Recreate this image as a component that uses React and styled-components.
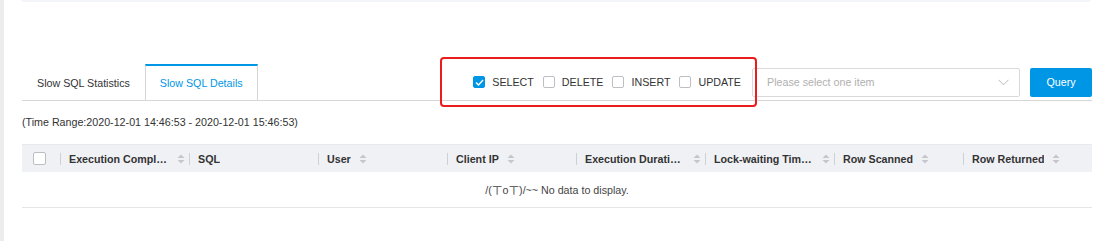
import React from "react";
import styled, { createGlobalStyle } from "styled-components";

const GlobalStyle = createGlobalStyle`
  body {
    margin: 0;
    background: #fff;
    font-family: "Liberation Sans", Arial, "Noto Sans CJK SC", sans-serif;
    font-size: 10.7px;
    color: #333;
  }
`;

const BLUE = "#0096e6";

const Page = styled.div`
  display: flex;
  width: 1107px;
  height: 241px;
  overflow: hidden;
`;

const Strip = styled.div`
  width: 4px;
  flex-shrink: 0;
  background: #ececec;
`;

const Main = styled.div`
  flex: 1;
  padding: 0 15px 0 18px;
  display: flex;
  flex-direction: column;
`;

const TopEdge = styled.div`
  height: 2px;
  margin-right: 2px;
  background: #f3f5f8;
`;

const Toolbar = styled.div`
  margin-top: 62px;
  display: flex;
  justify-content: space-between;
  align-items: center;
  border-bottom: 1px solid #d6d6d6;
`;

const Tabs = styled.div`
  display: flex;
  align-self: flex-end;
`;

const Tab = styled.div`
  box-sizing: border-box;
  height: 36px;
  padding: 0 14px;
  display: flex;
  align-items: center;
  color: ${(p) => (p.$active ? BLUE : "#333")};
  border-top: 2px solid ${(p) => (p.$active ? BLUE : "transparent")};
  border-left: 1px solid ${(p) => (p.$active ? "#d6d6d6" : "transparent")};
  border-right: 1px solid ${(p) => (p.$active ? "#d6d6d6" : "transparent")};
  background: #fff;
`;

const Controls = styled.div`
  display: flex;
  align-items: center;
`;

const CheckGroup = styled.div`
  position: relative;
  display: flex;
  align-items: center;
  gap: 9px;
  margin-right: 11px;
`;

const Annotation = styled.div`
  position: absolute;
  left: -33px;
  right: -16px;
  top: -17px;
  bottom: -17px;
  border: 2.5px solid #eb1c1c;
  border-radius: 4px;
  pointer-events: none;
`;

const CheckLabel = styled.label`
  display: flex;
  align-items: center;
  gap: 7px;
  color: #333;
  line-height: 16px;
`;

const Box = styled.span`
  box-sizing: border-box;
  width: ${(p) => p.$size || 12}px;
  height: ${(p) => p.$size || 12}px;
  border-radius: 2px;
  border: 1px solid ${(p) => (p.$checked ? BLUE : "#bcbec4")};
  background: ${(p) => (p.$checked ? BLUE : "#fff")};
  display: flex;
  align-items: center;
  justify-content: center;
  flex-shrink: 0;
`;

const Select = styled.div`
  box-sizing: border-box;
  width: 268px;
  height: 29px;
  border: 1px solid #d9d9d9;
  border-radius: 2px;
  padding: 0 10px 0 14px;
  display: flex;
  align-items: center;
  justify-content: space-between;
  color: #b0b0b0;
`;

const QueryButton = styled.button`
  margin-left: 10px;
  width: 62px;
  height: 29px;
  border: none;
  border-radius: 2px;
  background: ${BLUE};
  color: #fff;
  font-family: inherit;
  font-size: 10.7px;
  padding: 0;
`;

const TimeRange = styled.div`
  margin-top: 13px;
  line-height: 16px;
`;

const Table = styled.div`
  margin-top: 14px;
`;

const HeadRow = styled.div`
  display: flex;
  height: 28px;
  background: #f0f1f5;
  border-top: 1px solid #e8e9ee;
  box-sizing: border-box;
`;

const CheckCell = styled.div`
  width: 38px;
  flex-shrink: 0;
  display: flex;
  align-items: center;
  padding-left: 11px;
  box-sizing: border-box;
`;

const HeadCell = styled.div`
  flex: 1;
  min-width: 0;
  position: relative;
  display: flex;
  align-items: center;
  padding: 0 4px 0 9px;
  font-weight: bold;
  color: #333;

  &::before {
    content: "";
    position: absolute;
    left: 0;
    top: 8px;
    height: 12px;
    border-left: 1px solid #cfd0d4;
  }
`;

const Title = styled.span`
  flex: 0 1 auto;
  min-width: 0;
  white-space: nowrap;
  overflow: hidden;
  text-overflow: ellipsis;
`;

const SortIcon = styled.svg`
  flex-shrink: 0;
  margin-left: 8px;
`;

const EmptyRow = styled.div`
  height: 35px;
  display: flex;
  align-items: center;
  justify-content: center;
  border-bottom: 1px solid #e6e6e6;
  color: #444;
`;

const Check = () => (
  <svg width="9" height="7" viewBox="0 0 9 7">
    <polyline points="1,3.5 3.5,6 8,1" fill="none" stroke="#fff" strokeWidth="1.4" />
  </svg>
);

const Sort = () => (
  <SortIcon width="8" height="10" viewBox="0 0 8 10">
    <polygon points="4,0.5 7.5,4 0.5,4" fill="#c4c6cc" />
    <polygon points="0.5,6 7.5,6 4,9.5" fill="#c4c6cc" />
  </SortIcon>
);

const types = [
  { name: "SELECT", checked: true },
  { name: "DELETE" },
  { name: "INSERT" },
  { name: "UPDATE" },
];

const columns = [
  "Execution Completion Time",
  "SQL",
  "User",
  "Client IP",
  "Execution Duration (s)",
  "Lock-waiting Time (s)",
  "Row Scanned",
  "Row Returned",
];

const sortable = (c) => c !== "SQL";

export default function App() {
  return (
    <Page>
      <GlobalStyle />
      <Strip />
      <Main>
        <TopEdge />
        <Toolbar>
          <Tabs>
            <Tab>Slow SQL Statistics</Tab>
            <Tab $active>Slow SQL Details</Tab>
          </Tabs>
          <Controls>
            <CheckGroup>
              {types.map((t) => (
                <CheckLabel key={t.name}>
                  <Box $checked={t.checked}>{t.checked && <Check />}</Box>
                  {t.name}
                </CheckLabel>
              ))}
              <Annotation />
            </CheckGroup>
            <Select>
              <span>Please select one item</span>
              <svg width="11" height="7" viewBox="0 0 11 7">
                <polyline points="0.5,0.8 5.5,5.8 10.5,0.8" fill="none" stroke="#b8b8b8" strokeWidth="1" />
              </svg>
            </Select>
            <QueryButton>Query</QueryButton>
          </Controls>
        </Toolbar>
        <TimeRange>(Time Range:2020-12-01 14:46:53 - 2020-12-01 15:46:53)</TimeRange>
        <Table>
          <HeadRow>
            <CheckCell>
              <Box $size={13} />
            </CheckCell>
            {columns.map((c) => (
              <HeadCell key={c}>
                <Title>{c}</Title>
                {sortable(c) && <Sort />}
              </HeadCell>
            ))}
          </HeadRow>
          <EmptyRow>/(ㄒoㄒ)/~~ No data to display.</EmptyRow>
        </Table>
      </Main>
    </Page>
  );
}
